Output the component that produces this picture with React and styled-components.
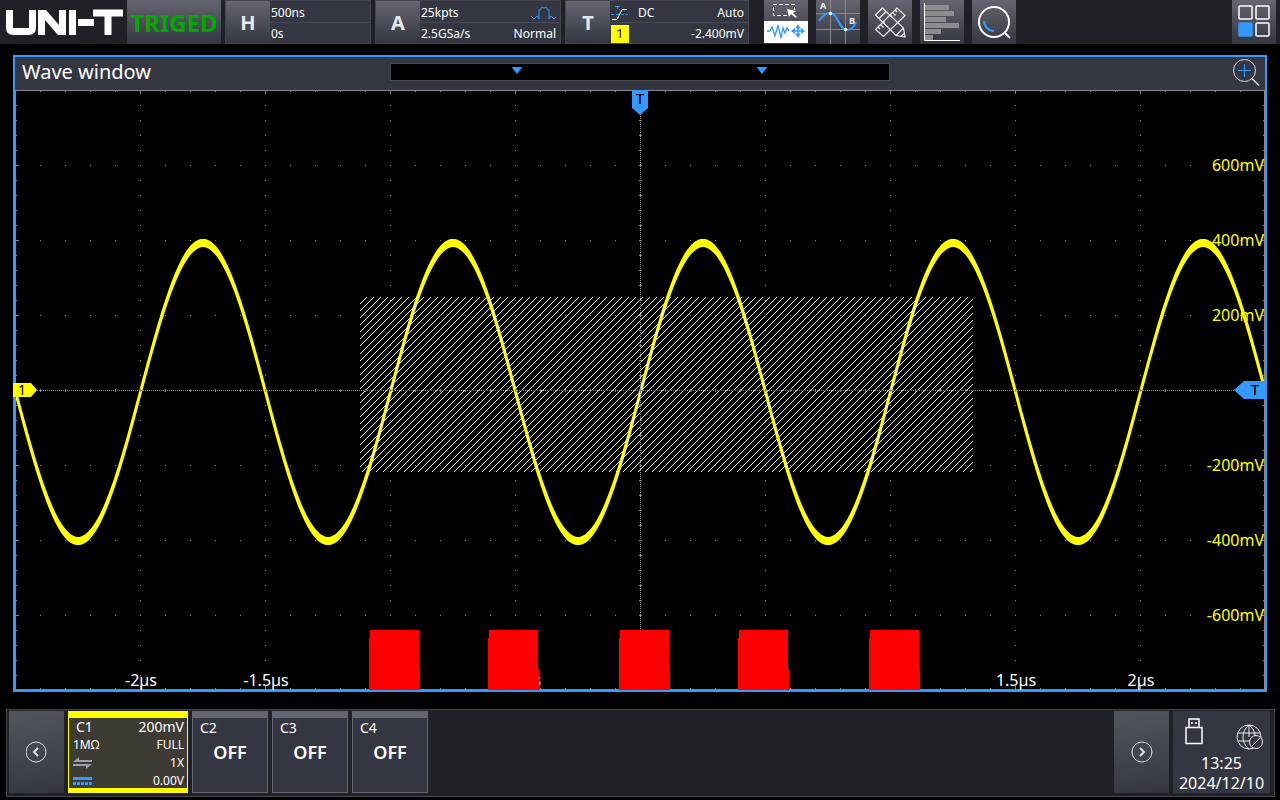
import React from 'react'
import styled, { createGlobalStyle, css } from 'styled-components'

const GlobalStyle = createGlobalStyle`
    * { box-sizing:border-box; }
    body {
        margin:0;
        background-color:#000;
        color:#fff;
        font-family:"Noto Sans", "Open Sans", sans-serif;
    }
    button {
        font-family:inherit;
        color:inherit;
        border:none;
        padding:0;
        cursor:pointer;
    }
`

const Screen = styled.div`
    display:flex;
    flex-direction:column;
`

const TopBar = styled.header`
    display:flex;
    align-items:stretch;
    height:44px;
    background-color:#202127;
`

const Logo = styled.svg`
    width:127px;
    height:44px;
    flex:none;
`

const Status = styled.div`
    width:94px;
    display:flex;
    align-items:center;
    justify-content:center;
    background:linear-gradient(#646570, #343741);
    color:#00aa00;
    font-size:24px;
    font-weight:700;
    margin-right:4px;
`

const Setting = styled.div`
    display:flex;
    width:${props => props.$width}px;
    border:1px solid #43454f;
    background-color:#343741;
    margin-right:4px;
`

const SettingKey = styled.button`
    width:44px;
    flex:none;
    background:linear-gradient(#646570, #343741);
    font-size:20px;
    font-weight:700;
    color:#e8e8e8;
`

const SettingRows = styled.div`
    flex:1;
    display:grid;
    grid-template-rows:1fr 1fr;
`

const SettingRow = styled.div`
    display:flex;
    align-items:center;
    justify-content:space-between;
    padding:2px 4px 0 1px;
    font-size:12px;
    line-height:16px;
    & + & {
        border-top:1px solid #464853;
    }
`

const RowGroup = styled.div`
    display:flex;
    align-items:center;
    gap:10px;
`

const SourceTag = styled.span`
    width:18px;
    height:18px;
    background-color:#ffff00;
    color:#000;
    text-align:center;
    line-height:18px;
`

const Tools = styled.nav`
    flex:1;
    display:flex;
    gap:8px;
    margin-left:11px;
    padding-right:4px;
`

const ToolButton = styled.button`
    width:44px;
    height:44px;
    background:linear-gradient(#646570, #343741);
    &:last-child {
        margin-left:auto;
    }
    svg { display:block; }
`

const WaveWindow = styled.section`
    margin:11px 13px 0;
    border:2px solid #3399ff;
`

const WaveHeader = styled.div`
    display:grid;
    grid-template-columns:1fr 40% 1fr;
    align-items:center;
    height:33px;
    padding-bottom:3px;
    background-color:#343741;
`

const WaveTitle = styled.h1`
    margin:0;
    padding-left:7px;
    font-size:20px;
    line-height:28px;
    font-weight:400;
`

const Overview = styled.svg`
    width:100%;
    height:18px;
    background-color:#000;
    border:1px solid #4a4a4e;
`

const ZoomButton = styled.button`
    justify-self:end;
    width:30px;
    height:30px;
    margin-right:4px;
    background:none;
    svg { display:block; }
`

const Plot = styled.svg`
    display:block;
    width:100%;
    height:auto;
    overflow:visible;
    background-color:#000;
    font-size:16px;
`

const BottomBar = styled.footer`
    display:flex;
    gap:4px;
    height:88px;
    margin:17px 5px 0 6px;
    padding:1px 4px 3px 2px;
    border:1px solid #43454f;
    background-color:#202127;
`

const PageButton = styled.button`
    width:55px;
    display:flex;
    align-items:center;
    justify-content:center;
    background:linear-gradient(170deg, #52565c, #343741);
    ${props => props.$last && css`margin-left:auto;`}
`

const ActiveChannel = styled.button`
    width:120px;
    display:flex;
    flex-direction:column;
    justify-content:flex-start;
    border:1px solid #ffff00;
    border-width:7px 1px 5px;
    padding:0 3px 0 4px;
    background-color:#3d3c34;
`

const ChannelLine = styled.span`
    flex:none;
    display:flex;
    align-items:center;
    justify-content:space-between;
    width:100%;
    height:18px;
    line-height:18px;
    font-size:${props => props.$head ? '14px' : '12px'};
    padding-left:${props => props.$head ? '3px' : '0'};
`

const Channel = styled.button`
    width:76px;
    display:flex;
    flex-direction:column;
    border:1px solid #646570;
    border-top-width:7px;
    padding:0 7px;
    background-color:#343741;
    font-size:14px;
    line-height:20px;
    text-align:left;
`

const Off = styled.strong`
    align-self:center;
    font-size:18px;
    line-height:28px;
    font-weight:600;
`

const Clock = styled.div`
    width:97px;
    padding-top:6px;
    background-color:#343741;
    text-align:center;
    font-size:16px;
    line-height:20px;
`

const ClockIcons = styled.div`
    display:flex;
    justify-content:space-between;
    padding:0 6px 0 12px;
    height:36px;
`

const divisions = [
    { label:'600mV', y:75 },
    { label:'400mV', y:150 },
    { label:'200mV', y:225 },
    { label:'-200mV', y:375 },
    { label:'-400mV', y:450 },
    { label:'-600mV', y:525 },
]

const times = [
    { label:'-2µs', x:126 },
    { label:'-1.5µs', x:251 },
    { label:'-500ns', x:501 },
    { label:'1.5µs', x:1001 },
    { label:'2µs', x:1126 },
]

const redBlocks = [354, 473, 604, 723, 854]

const wavePath = () => {
    const top = []
    const bottom = []
    for (let x = 0; x <= 1250; x += 2) {
        const a = (x - 625.5) / 250 * Math.PI * 2
        const y = 302 - Math.sin(a) * 149
        const h = 4 + 2 * Math.abs(Math.cos(a))
        top.push(`${x} ${(y - h).toFixed(1)}`)
        bottom.unshift(`${x} ${(y + h).toFixed(1)}`)
    }
    return `M${top.join('L')}L${bottom.join('L')}Z`
}

const hatchPath = () => {
    let d = ''
    const [l, t, r, b] = [345, 207, 958, 382]
    // 5px apart, measured across the lines
    const step = 5 * Math.SQRT2
    for (let s = step; s < r - l + b - t; s += step) {
        const c = l + t + Math.round(s)
        const x1 = Math.max(l, c - b)
        const x2 = Math.min(r, c - t)
        d += `M${x1} ${c - x1}L${x2} ${c - x2}`
    }
    return d
}

const gridPath = () => {
    let d = ''
    for (let i = 0; i <= 50; i++) {
        const x = i * 25
        const len = i % 5 ? 2 : 4
        d += `M${x} 0h1v${len}h-1zM${x} ${600 - len}h1v${len}h-1zM${x} 299h1v3h-1z`
        for (let y = 75; y < 600; y += 75) d += `M${x} ${y}h1v1h-1z`
    }
    for (let j = 0; j <= 40; j++) {
        const y = j * 15
        const len = j % 5 ? 2 : 4
        d += `M0 ${y}h${len}v1h-${len}zM${1250 - len} ${y}h${len}v1h-${len}zM624 ${y}h3v1h-3z`
        for (let x = 125; x < 1250; x += 125) d += `M${x} ${y}h1v1h-1z`
    }
    return d
}

function WavePlot() {
    return (
        <Plot viewBox="0 0 1250 600">
            <path d={wavePath()} fill="#ffff00" />
            <path d={hatchPath()} stroke="#fff" fill="none" shapeRendering="crispEdges" />
            <g shapeRendering="crispEdges">
                <path d={gridPath()} fill="#888" />
                <path d="M0 300.5H1250M625.5 0V600" stroke="#888" strokeDasharray="1 1" />
                <path d="M0 .5H1250M.5 0V600M1249.5 0V600M0 599.5H1250" stroke="#888" fill="none" />
            </g>
            <g fill="#ffff00" textAnchor="end">
                {divisions.map(d => <text key={d.label} x="1249" y={d.y + 6}>{d.label}</text>)}
            </g>
            <g fill="#fff" textAnchor="middle">
                {times.map(t => <text key={t.label} x={t.x} y="596">{t.label}</text>)}
            </g>
            <g fill="#ff0000" shapeRendering="crispEdges">
                {redBlocks.map(x => <path key={x} d={`M${x + 1} 540h49v40h1v20h-51v-52h1z`} />)}
            </g>
            <path d="M617 0h16v18l-8 7l-8-7z" fill="#3399ff" />
            <text x="625" y="14" textAnchor="middle" fontSize="15" fontWeight="500">T</text>
            <path d="M-2 293h18l6 7l-6 7H-2z" fill="#ffff00" />
            <text x="7" y="305" textAnchor="middle" fontSize="14">1</text>
            <path d="M1219 300l10-9h21v18h-21z" fill="#3399ff" />
            <text x="1240" y="305" textAnchor="middle" fontSize="15" fontWeight="500">T</text>
        </Plot>
    )
}

function App() {
    return (
        <Screen>
            <GlobalStyle />
            <TopBar>
                <Logo viewBox="0 0 127 44" role="img" aria-label="UNI-T">
                    <g fill="none" stroke="#fff" strokeWidth="7">
                        <path d="M9.500 10v17.500q0 4 4 4h15q4 0 4-4V10" />
                        <path d="M72.500 10v25" />
                        <path d="M78 22.500h16" />
                        <path d="M93 13h30M108 13v22" />
                    </g>
                    <path d="M38 35V10h8l13 15V10h7v25h-8L45 20v15z" fill="#fff" />
                </Logo>
                <Status>TRIGED</Status>
                <Setting $width={146}>
                    <SettingKey>H</SettingKey>
                    <SettingRows>
                        <SettingRow>500ns</SettingRow>
                        <SettingRow>0s</SettingRow>
                    </SettingRows>
                </Setting>
                <Setting $width={186}>
                    <SettingKey>A</SettingKey>
                    <SettingRows>
                        <SettingRow>
                            <span>25kpts</span>
                            <svg width="26" height="14" viewBox="0 0 26 14" fill="none" stroke="#3399ff">
                                <path d="M1 10l3 3l3-3l2 3V4l2-1l1-2l2 1l2-1l1 2l2 1v9l2-3l3 3l3-3" />
                            </svg>
                        </SettingRow>
                        <SettingRow>
                            <span>2.5GSa/s</span>
                            <span>Normal</span>
                        </SettingRow>
                    </SettingRows>
                </Setting>
                <Setting $width={184}>
                    <SettingKey>T</SettingKey>
                    <SettingRows>
                        <SettingRow>
                            <RowGroup>
                                <svg width="17" height="16" viewBox="0 0 17 16" fill="none">
                                    <path d="M0 9.500h17" stroke="#3399ff" strokeDasharray="3 2" />
                                    <path d="M4 1.500h5M6.500 1v3" stroke="#3399ff" />
                                    <path d="M1 14.500h5l5-10h5" stroke="#fff" />
                                </svg>
                                <span>DC</span>
                            </RowGroup>
                            <span>Auto</span>
                        </SettingRow>
                        <SettingRow>
                            <SourceTag>1</SourceTag>
                            <span>-2.400mV</span>
                        </SettingRow>
                    </SettingRows>
                </Setting>
                <Tools>
                    <ToolButton aria-label="Touch mode">
                        <svg width="44" height="44" viewBox="0 0 44 44" fill="none">
                            <path d="M0 21h44v22H0z" fill="#fff" />
                            <path d="M23 15.500H9.500v-11h21V10" stroke="#fff" strokeDasharray="4 2" />
                            <path d="M23 9l9 2l-3 2l4 4l-1 1l-5-4l-2 3z" fill="#fff" />
                            <path d="M3 31h3l2-4l3 9l3-11l3 13l2-10l2 5l2-5l2 3" stroke="#3399ff" strokeWidth="1.300" />
                            <path d="M28 31h12M34 25v12" stroke="#3399ff" strokeWidth="1.500" />
                            <path d="M27 31l4-3v6zM41 31l-4-3v6zM34 24.500l-3 4h6zM34 37.500l-3-4h6z" fill="#3399ff" />
                        </svg>
                    </ToolButton>
                    <ToolButton aria-label="Cursor">
                        <svg width="44" height="44" viewBox="0 0 44 44" fill="none">
                            <path d="M0 13.500h44M0 29.500h44M14.500 0v44M29.500 0v44" stroke="#888" />
                            <path d="M3 21c4-6 7-8 11-8c8 0 9 17 17 17c4 0 7-3 9-8" stroke="#3399ff" strokeWidth="2" />
                            <circle cx="14.500" cy="13.500" r="1.700" fill="#fff" />
                            <circle cx="29.500" cy="29.500" r="1.700" fill="#fff" />
                            <text x="4" y="9" fill="#eee" fontSize="9" fontWeight="700">A</text>
                            <text x="33" y="24" fill="#eee" fontSize="9" fontWeight="700">B</text>
                        </svg>
                    </ToolButton>
                    <ToolButton aria-label="Measure">
                        <svg width="44" height="44" viewBox="0 0 44 44" fill="none" stroke="#eee" strokeWidth="1.200">
                            <path d="M7.500 29.500L29 8l8 7.500L15.500 36.500z" />
                            <path d="M10 27l2 2M12.500 24.500l3 3M15 22l2 2M22 15l2 2M24.500 12.500l3 3M27 10l2 2" />
                            <path d="M14.500 8L7.500 15L28 35.500l9 1.500l-1.500-9zM18 11.500l-7 7M28 35.500l7.500-7.500M33 36.500l3.500-3.500" />
                        </svg>
                    </ToolButton>
                    <ToolButton aria-label="Statistics">
                        <svg width="44" height="44" viewBox="0 0 44 44">
                            <path d="M5 5h24v5H5zM5 11h29v5H5zM5 17h21v5H5zM5 23h34v5H5zM5 29h16v5H5zM5 35h8v5H5z" fill="#8c8c8c" />
                            <path d="M4.500 3v37.500H40" stroke="#fff" fill="none" />
                        </svg>
                    </ToolButton>
                    <ToolButton aria-label="Search">
                        <svg width="44" height="44" viewBox="0 0 44 44" fill="none">
                            <circle cx="22" cy="22" r="15" stroke="#fff" strokeWidth="2" />
                            <path d="M33 33l5 5" stroke="#fff" strokeWidth="2" />
                            <path d="M12 21a10 10 0 0 0 10 10" stroke="#3399ff" strokeWidth="2" />
                        </svg>
                    </ToolButton>
                    <ToolButton aria-label="Menu">
                        <svg width="44" height="44" viewBox="0 0 44 44" fill="none" stroke="#fff" strokeWidth="1.500">
                            <rect x="7" y="6" width="13" height="13" rx="1" />
                            <rect x="24" y="6" width="13" height="13" rx="1" />
                            <rect x="24" y="23" width="13" height="13" rx="1" />
                            <rect x="7" y="23" width="13" height="13" rx="1" fill="#3399ff" stroke="#3399ff" />
                        </svg>
                    </ToolButton>
                </Tools>
            </TopBar>

            <WaveWindow>
                <WaveHeader>
                    <WaveTitle>Wave window</WaveTitle>
                    <Overview viewBox="0 0 500 16">
                        <path d="M121 3h11l-5.500 7zM367 3h11l-5.500 7z" fill="#3399ff" />
                    </Overview>
                    <ZoomButton aria-label="Zoom in">
                        <svg width="30" height="30" viewBox="0 0 30 30" fill="none" stroke="#ddd">
                            <circle cx="13.500" cy="13.500" r="11" />
                            <path d="M21 21.500l7 7" strokeWidth="1.500" />
                            <path d="M7 13.500h13M13.500 7v13" stroke="#3399ff" />
                        </svg>
                    </ZoomButton>
                </WaveHeader>
                <WavePlot />
            </WaveWindow>

            <BottomBar>
                <PageButton aria-label="Previous">
                    <svg width="22" height="22" viewBox="0 0 22 22" fill="none" stroke="#ddd">
                        <circle cx="10" cy="11" r="10" />
                        <path d="M12 7l-4 4l4 4" strokeWidth="2" />
                    </svg>
                </PageButton>
                <ActiveChannel>
                    <ChannelLine $head><span>C1</span><span>200mV</span></ChannelLine>
                    <ChannelLine><span>1MΩ</span><span>FULL</span></ChannelLine>
                    <ChannelLine>
                        <svg width="20" height="12" viewBox="0 0 20 12" fill="#9d9fb0">
                            <path d="M0 5l6-5v3h13v2zM19 7l-6 5V9H0V7z" />
                        </svg>
                        <span>1X</span>
                    </ChannelLine>
                    <ChannelLine>
                        <svg width="20" height="8" viewBox="0 0 20 8" fill="#3399ff">
                            <path d="M0 0h19v3H0zM0 5h3v3H0zM4 5h3v3H4zM8 5h3v3H8zM12 5h3v3h-3zM16 5h3v3h-3z" />
                        </svg>
                        <span>0.00V</span>
                    </ChannelLine>
                </ActiveChannel>
                {['C2', 'C3', 'C4'].map(name => (
                    <Channel key={name}>
                        <span>{name}</span>
                        <Off>OFF</Off>
                    </Channel>
                ))}
                <PageButton $last aria-label="Next">
                    <svg width="22" height="22" viewBox="0 0 22 22" fill="none" stroke="#ddd">
                        <circle cx="11" cy="11" r="10" />
                        <path d="M9 7l4 4l-4 4" strokeWidth="2" />
                    </svg>
                </PageButton>
                <Clock>
                    <ClockIcons>
                        <svg width="18" height="28" viewBox="0 0 18 28" fill="none" stroke="#fff" strokeWidth="1.500">
                            <path d="M1 10.500h16v16H1zM4 10V2h10v8M6 6h2M10 6h2" />
                        </svg>
                        <svg width="28" height="34" viewBox="0 0 28 34" fill="none" stroke="#eee">
                            <circle cx="13" cy="20" r="12" />
                            <path d="M2 16h22M2 24h12M13 8c-8 6-8 18 0 24M13 8c4 3 6 7 6 11M13 8v12" />
                            <circle cx="20" cy="25" r="6.500" fill="#343741" />
                            <path d="M16 29l8-8" />
                        </svg>
                    </ClockIcons>
                    <div>13:25</div>
                    <div>2024/12/10</div>
                </Clock>
            </BottomBar>
        </Screen>
    )
}

export default App
